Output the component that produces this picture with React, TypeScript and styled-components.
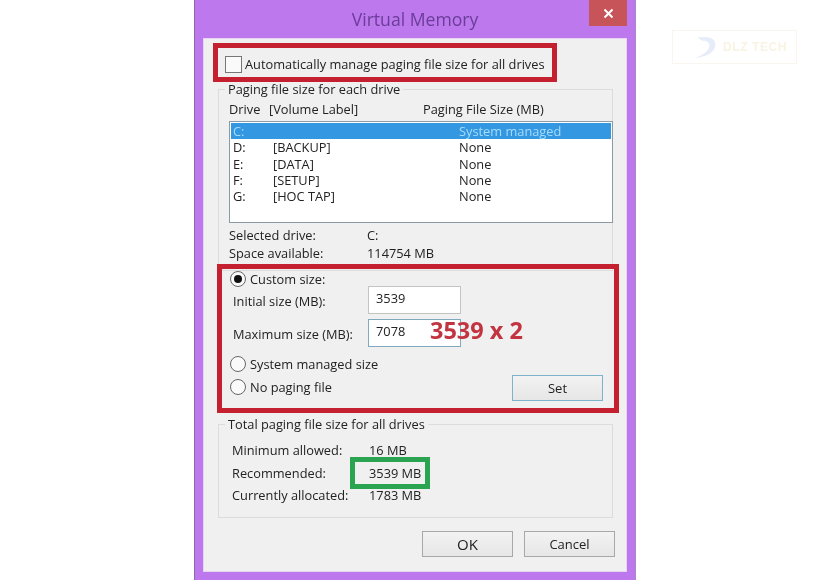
import { type FC } from "react";
import styled, { createGlobalStyle } from "styled-components";

const GlobalStyle = createGlobalStyle`
  html, body {
    margin: 0;
    background: #fff;
  }
  body {
    font-family: "Open Sans", "Liberation Sans", sans-serif;
    font-size: 12.8px;
    color: #222;
  }
`;

const Page = styled.div`
  position: relative;
  width: 840px;
  height: 580px;
  overflow: hidden;
  padding-left: 194px;
  box-sizing: border-box;
`;

const Watermark = styled.div`
  position: absolute;
  left: 672px;
  top: 30px;
  width: 125px;
  height: 34px;
  box-sizing: border-box;
  border: 1px solid #f8f6ee;
  display: flex;
  align-items: center;
  gap: 2px;
  padding-left: 18px;
  color: #f8f3e2;
  font: bold 12px "Liberation Sans", sans-serif;
  letter-spacing: 0.6px;
  filter: blur(0.6px);
`;

const Window = styled.div`
  width: 442px;
  height: 580px;
  box-sizing: border-box;
  background: #bd78ee;
  border-left: 1px solid #8f6aa8;
  border-right: 1px solid #a98ac0;
  display: flex;
  flex-direction: column;
  filter: blur(0.35px);
`;

const TitleBar = styled.div`
  height: 38px;
  flex: none;
  display: flex;
  justify-content: center;
  align-items: center;
  position: relative;
  font-size: 17.6px;
  color: #6a3d98;
  box-sizing: border-box;
`;

const CloseButton = styled.div`
  position: absolute;
  right: 8px;
  top: 0;
  width: 38px;
  height: 26px;
  background: #c75458;
  display: flex;
  align-items: center;
  justify-content: center;
  color: #fff;
`;

const Client = styled.div`
  margin: 0 8px;
  height: 534px;
  flex: none;
  background: #f0f0f0;
  border: 1px solid #e6d5f2;
  box-sizing: border-box;
  display: flex;
  flex-direction: column;
  position: relative;
`;

const AutoBox = styled.div`
  margin: 4px 0 -1px 9px;
  width: 344px;
  height: 39px;
  box-sizing: border-box;
  border: 5px solid #c4202f;
  display: flex;
  align-items: center;
  gap: 3px;
  padding: 3px 0 0 7px;
`;

const Checkbox = styled.span`
  width: 15px;
  height: 15px;
  flex: none;
  border: 1px solid #777;
  background: #fafafa;
`;

const Group = styled.fieldset<{ $height: number }>`
  margin: 0 0 0 14px;
  padding: 0;
  width: 395px;
  height: ${(p) => p.$height}px;
  box-sizing: border-box;
  border: 1px solid #dcdcdc;
  min-width: 0;
`;

const Legend = styled.legend`
  margin-left: 6px;
  padding: 0 3px;
  line-height: 16px;
`;

const DriveHead = styled.div`
  display: grid;
  grid-template-columns: 40px 154px 1fr;
  padding: 4px 0 0 10px;
  line-height: 16px;
`;

const ListBox = styled.div`
  margin: 4px 0 0 10px;
  width: 384px;
  height: 102px;
  box-sizing: border-box;
  background: #fff;
  border: 1px solid #8a9aa6;
  padding: 1px;
`;

const DriveRow = styled.div<{ $selected?: boolean }>`
  display: grid;
  grid-template-columns: 40px 186px 1fr;
  height: 16.3px;
  line-height: 16px;
  padding-left: 2px;
  background: ${(p) => (p.$selected ? "#3397e2" : "transparent")};
  color: ${(p) => (p.$selected ? "#a5dcfb" : "#222")};
`;

const InfoRow = styled.div`
  display: grid;
  grid-template-columns: 138px 1fr;
  padding-left: 10px;
  line-height: 18px;
`;

const InfoRows = styled.div`
  margin-top: 3px;
`;

const CustomBox = styled.div`
  margin: -7px 0 3px 13px;
  width: 402px;
  height: 149px;
  box-sizing: border-box;
  border: 5px solid #c4202f;
  padding: 2px 0 0 8px;
  display: flex;
  flex-direction: column;
  position: relative;
  z-index: 1;
`;

const RadioRow = styled.div<{ $top: number }>`
  display: flex;
  align-items: center;
  gap: 4px;
  margin-top: ${(p) => p.$top}px;
  line-height: 16px;
`;

const Radio = styled.span<{ $checked?: boolean }>`
  width: 14px;
  height: 14px;
  flex: none;
  border-radius: 50%;
  border: 1px solid #666;
  background: #fafafa;
  display: flex;
  align-items: center;
  justify-content: center;
  &::after {
    content: "";
    width: 8px;
    height: 8px;
    border-radius: 50%;
    background: ${(p) => (p.$checked ? "#111" : "transparent")};
  }
`;

const SizeRow = styled.div<{ $top: number }>`
  display: flex;
  align-items: center;
  margin-top: ${(p) => p.$top}px;
  padding-left: 3px;
`;

const SizeLabel = styled.span`
  width: 135px;
  padding-top: 2px;
`;

const SizeInput = styled.div<{ $focused?: boolean }>`
  width: 93px;
  height: 28px;
  box-sizing: border-box;
  background: #fff;
  border: 1px solid ${(p) => (p.$focused ? "#7fa9bd" : "#c4c4c4")};
  padding: 3px 0 0 7px;
  line-height: 16px;
`;

const Annotation = styled.span`
  position: absolute;
  left: 208px;
  top: 46px;
  font: bold 23.5px "Open Sans", sans-serif;
  color: #c23440;
  line-height: 30px;
  white-space: nowrap;
`;

const Button = styled.div<{ $focused?: boolean; $big?: boolean }>`
  width: 91px;
  height: 26px;
  box-sizing: border-box;
  border: 1px solid ${(p) => (p.$focused ? "#7db4c9" : "#a8a8a8")};
  background: linear-gradient(#f2f2f2, #e6e6e6);
  display: flex;
  align-items: center;
  justify-content: center;
  font-size: ${(p) => (p.$big ? 15 : 13)}px;
`;

const SetButton = styled(Button)`
  position: absolute;
  right: 11px;
  bottom: 7px;
`;

const TotalRows = styled.div`
  position: relative;
  padding: 7px 0 0 13px;
`;

const TotalRow = styled.div`
  display: grid;
  grid-template-columns: 137px 1fr;
  height: 22.5px;
  line-height: 22px;
`;

const GreenBox = styled.div`
  position: absolute;
  left: 131px;
  top: 25px;
  width: 80px;
  height: 32px;
  box-sizing: border-box;
  border: 5px solid #2ba451;
`;

const Footer = styled.div`
  display: flex;
  justify-content: flex-end;
  gap: 11px;
  margin: 13px 11px 0 0;
`;

const App: FC = () => {
  const drives = [
    ["C:", "", "System managed"],
    ["D:", "[BACKUP]", "None"],
    ["E:", "[DATA]", "None"],
    ["F:", "[SETUP]", "None"],
    ["G:", "[HOC TAP]", "None"],
  ];
  return (
    <Page>
      <GlobalStyle />
      <Window>
        <TitleBar>
          Virtual Memory
          <CloseButton>
            <svg width="11" height="11" viewBox="0 0 11 11">
              <path d="M1.5 1.5l8 8M9.5 1.5l-8 8" stroke="#fff" strokeWidth="2" />
            </svg>
          </CloseButton>
        </TitleBar>
        <Client>
          <AutoBox>
            <Checkbox />
            Automatically manage paging file size for all drives
          </AutoBox>
          <Group $height={190}>
            <Legend>Paging file size for each drive</Legend>
            <DriveHead>
              <span>Drive</span>
              <span>[Volume Label]</span>
              <span>Paging File Size (MB)</span>
            </DriveHead>
            <ListBox>
              {drives.map(([d, v, s]) => (
                <DriveRow key={d} $selected={d === "C:"}>
                  <span>{d}</span>
                  <span>{v}</span>
                  <span>{s}</span>
                </DriveRow>
              ))}
            </ListBox>
            <InfoRows>
              <InfoRow>
                <span>Selected drive:</span>
                <span>C:</span>
              </InfoRow>
              <InfoRow>
                <span>Space available:</span>
                <span>114754 MB</span>
              </InfoRow>
            </InfoRows>
          </Group>
          <CustomBox>
            <RadioRow $top={0}>
              <Radio $checked />
              Custom size:
            </RadioRow>
            <SizeRow $top={-1}>
              <SizeLabel>Initial size (MB):</SizeLabel>
              <SizeInput>3539</SizeInput>
            </SizeRow>
            <SizeRow $top={5}>
              <SizeLabel>Maximum size (MB):</SizeLabel>
              <SizeInput $focused>7078</SizeInput>
            </SizeRow>
            <RadioRow $top={9}>
              <Radio />
              System managed size
            </RadioRow>
            <RadioRow $top={7}>
              <Radio />
              No paging file
            </RadioRow>
            <Annotation>3539 x 2</Annotation>
            <SetButton $focused>Set</SetButton>
          </CustomBox>
          <Group $height={102}>
            <Legend>Total paging file size for all drives</Legend>
            <TotalRows>
              <TotalRow>
                <span>Minimum allowed:</span>
                <span>16 MB</span>
              </TotalRow>
              <TotalRow>
                <span>Recommended:</span>
                <span>3539 MB</span>
              </TotalRow>
              <TotalRow>
                <span>Currently allocated:</span>
                <span>1783 MB</span>
              </TotalRow>
              <GreenBox />
            </TotalRows>
          </Group>
          <Footer>
            <Button $big>OK</Button>
            <Button>Cancel</Button>
          </Footer>
        </Client>
      </Window>
      <Watermark>
        <svg width="30" height="26" viewBox="0 0 28 24">
          <path d="M6 3h8c8 0 10 5 8 10-2 5-7 8-18 9 8-3 12-6 13-10 1-3-1-6-7-6z" fill="#e6ecf8" />
        </svg>
        DLZ TECH
      </Watermark>
    </Page>
  );
};

export default App;
